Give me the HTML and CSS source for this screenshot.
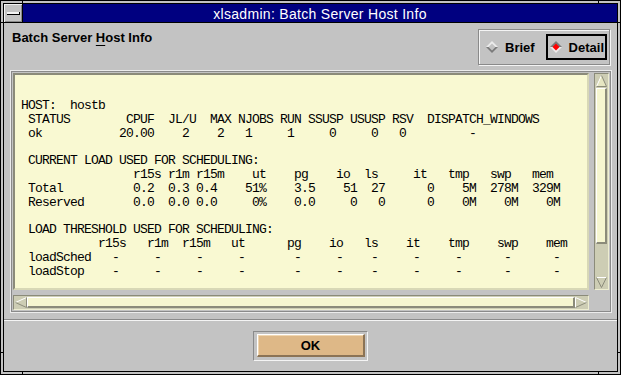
FILE: index.html
```html
<!DOCTYPE html>
<html>
<head>
<meta charset="utf-8">
<link rel="stylesheet" href="styles.css">
</head>
<body>
<div class="window">
  <div class="frame">
    <div class="titlebar">
      <div class="menu-btn"><span class="menu-bar"></span></div>
      <div class="title">xlsadmin: Batch Server Host Info</div>
    </div>
    <div class="content">
      <div class="head">
        <div class="label">Batch Server <span class="mn">H</span>ost Info</div>
        <div class="radiobox">
          <div class="toggle brief">
            <svg width="12" height="12" viewBox="0 0 12 12"><polygon points="0,6 6,0 12,6" fill="#ececec"/><polygon points="0,6 6,12 12,6" fill="#7a7a7a"/><polygon points="2.5,6 6,2.5 9.5,6 6,9.5" fill="#c3c3c3"/></svg>
            <span>Brief</span>
          </div>
          <div class="toggle detail">
            <svg width="12" height="12" viewBox="0 0 12 12"><polygon points="0,6 6,0 12,6" fill="#7a7a7a"/><polygon points="0,6 6,12 12,6" fill="#ececec"/><polygon points="2.5,6 6,2.5 9.5,6 6,9.5" fill="#ff0000"/></svg>
            <span>Detail</span>
          </div>
        </div>
      </div>
      <div class="scrolled">
        <div class="textarea"><pre class="out">HOST:  hostb
 STATUS        CPUF  JL/U  MAX NJOBS RUN SSUSP USUSP RSV  DISPATCH_WINDOWS
 ok           20.00    2    2   1     1     0     0   0         -

 CURRENT LOAD USED FOR SCHEDULING:
                r15s r1m r15m    ut    pg    io  ls     it   tmp   swp   mem
 Total          0.2  0.3 0.4    51%    3.5    51  27      0    5M  278M  329M
 Reserved       0.0  0.0 0.0     0%    0.0     0   0      0    0M    0M    0M

 LOAD THRESHOLD USED FOR SCHEDULING:
           r15s   r1m  r15m   ut      pg    io   ls    it    tmp    swp    mem
 loadSched   -     -     -     -       -     -    -     -     -      -      -
 loadStop    -     -     -     -       -     -    -     -     -      -      -</pre></div>
        <div class="vscroll">
          <svg class="arr-up" width="11" height="12" viewBox="0 0 11 12"><polygon points="5.5,0.5 10.5,11.5 0.5,11.5" fill="#e6e6c2"/><path d="M0.5 11.5 L5.5 0.5" stroke="#ffffff" fill="none"/><path d="M5.5 0.5 L10.5 11.5 L0.5 11.5" stroke="#8b8b7a" fill="none"/></svg>
          <div class="vthumb"></div>
          <div class="trough"></div>
          <svg class="arr-down" width="11" height="11" viewBox="0 0 11 11"><polygon points="0.5,0.5 10.5,0.5 5.5,10.5" fill="#cdcdb4"/><path d="M0.5 0.5 L10.5 0.5" stroke="#ffffff" fill="none"/><path d="M0.5 0.5 L5.5 10.5 L10.5 0.5" stroke="#8b8b7a" fill="none"/></svg>
        </div>
        <div class="hscroll">
          <svg class="arr-left" width="12" height="11" viewBox="0 0 12 11"><polygon points="0.5,5.5 11.5,0.5 11.5,10.5" fill="#cdcdb4"/><path d="M0.5 5.5 L11.5 0.5" stroke="#ffffff" fill="none"/><path d="M0.5 5.5 L11.5 10.5 L11.5 0.5" stroke="#8b8b7a" fill="none"/></svg>
          <div class="hthumb"></div>
          <svg class="arr-right" width="12" height="11" viewBox="0 0 12 11"><polygon points="0.5,0.5 11.5,5.5 0.5,10.5" fill="#cdcdb4"/><path d="M0.5 10.5 L0.5 0.5 L11.5 5.5" stroke="#ffffff" fill="none"/><path d="M11.5 5.5 L0.5 10.5" stroke="#8b8b7a" fill="none"/></svg>
        </div>
        <div class="corner"></div>
      </div>
      <div class="sep"></div>
      <div class="actions">
        <div class="okframe"><div class="okbtn">OK</div></div>
      </div>
    </div>
  </div>
  <span class="notch nt1"></span>
  <span class="notch nt2"></span>
  <span class="notch nb1"></span>
  <span class="notch nb2"></span>
  <span class="notch nl1"></span>
  <span class="notch nl2"></span>
  <span class="notch nr1"></span>
  <span class="notch nr2"></span>
</div>
</body>
</html>
```
FILE: styles.css
```css
* { box-sizing: border-box; }
html, body { margin: 0; padding: 0; }
body {
  width: 621px;
  height: 375px;
  overflow: hidden;
  background: #c3c3c3;
  font-family: "Liberation Sans", Arial, sans-serif;
  color: #000;
}
.window {
  position: relative;
  width: 621px;
  height: 375px;
  border: 1px solid #000;
  padding: 2px;
  background: #c3c3c3;
}
.frame {
  height: 100%;
  border: 1px solid #000;
  display: flex;
  flex-direction: column;
}
.titlebar {
  flex: none;
  display: flex;
  height: 19px;
  border-bottom: 1px solid #000;
}
.menu-btn {
  width: 19px;
  border-right: 1px solid #000;
  background: #c3c3c3;
  box-shadow: inset 1px 1px 0 #f2f2f2, inset -1px -1px 0 #8a8a8a;
  display: flex;
  align-items: center;
  justify-content: center;
}
.menu-bar {
  display: block;
  width: 13px;
  height: 3px;
  background: #f4f4f4;
  border-right: 1px solid #000;
  border-bottom: 1px solid #000;
}
.title {
  flex: 1;
  background: #000080;
  color: #fff;
  font-size: 14px;
  line-height: 18px;
  padding-top: 1px;
  letter-spacing: 0.3px;
  text-align: center;
  white-space: nowrap;
  overflow: hidden;
}
.content {
  flex: 1;
  display: flex;
  flex-direction: column;
}
.head {
  flex: none;
  display: flex;
  justify-content: space-between;
  align-items: flex-start;
  height: 36px;
  margin: 6px 7px 0 8px;
}
.label {
  font-weight: bold;
  font-size: 13px;
  line-height: 15px;
  margin-top: 1px;
}
.mn {
  text-decoration: underline;
  text-underline-offset: 3px;
}
.radiobox {
  width: 132px;
  height: 36px;
  border: 1px solid #8a8a8a;
  box-shadow: inset 1px 1px 0 #f4f4f4, 1px 1px 0 #f4f4f4;
  display: flex;
  align-items: center;
  padding: 0 2px 0 7px;
}
.toggle {
  display: flex;
  align-items: center;
  gap: 7px;
  font-weight: bold;
  font-size: 13px;
  line-height: 15px;
}
.toggle svg { display: block; flex: none; }
.detail {
  margin-left: auto;
  height: 26px;
  border: 2px solid #000;
  padding: 0 1px 0 2px;
}
.scrolled {
  flex: none;
  height: 243px;
  margin: 5px 5px 0 6px;
  border: 1px solid #ececec;
  box-shadow: inset 0 0 0 1px #8a8a8a;
  padding: 2px;
  display: grid;
  grid-template-columns: 576px 15px;
  grid-template-rows: 217px 15px;
  column-gap: 5px;
  row-gap: 5px;
}
.textarea {
  background: #f9f9d2;
  border: 2px solid;
  border-color: #8b8b7a #d8d8b6 #d8d8b6 #8b8b7a;
  overflow: hidden;
}
.out {
  margin: 0;
  padding: 24px 0 0 6px;
  font-family: "Liberation Mono", "Courier New", monospace;
  font-size: 13px;
  letter-spacing: -0.8px;
  line-height: 13.83px;
  color: #000;
}
.vscroll {
  background: #cdcdb4;
  border: 1px solid;
  border-color: #8b8b7a #eeeed1 #eeeed1 #8b8b7a;
  display: flex;
  flex-direction: column;
  align-items: center;
}
.arr-up { display: block; margin-top: 1px; flex: none; }
.vthumb {
  flex: none;
  width: 11px;
  height: 156px;
  margin-top: 1px;
  background: #f6f6d0;
  border-top: 1px solid #ffffff;
  border-left: 1px solid #ffffff;
  border-right: 2px solid #8b8b7a;
  border-bottom: 2px solid #8b8b7a;
}
.trough { flex: 1; }
.arr-down { display: block; margin-bottom: 1px; flex: none; }
.hscroll {
  background: #cdcdb4;
  border: 1px solid;
  border-color: #8b8b7a #eeeed1 #eeeed1 #8b8b7a;
  display: flex;
  align-items: center;
}
.arr-left { display: block; margin-left: 1px; flex: none; }
.arr-right { display: block; margin-right: 1px; flex: none; }
.hthumb {
  flex: 1;
  height: 11px;
  background: #f6f6d0;
  border-top: 1px solid #ffffff;
  border-left: 1px solid #ffffff;
  border-right: 2px solid #8b8b7a;
  border-bottom: 2px solid #8b8b7a;
}
.corner { background: #c3c3c3; }
.sep {
  flex: none;
  height: 2px;
  margin-top: 6px;
  border-top: 1px solid #8a8a8a;
  border-bottom: 1px solid #f4f4f4;
}
.actions {
  flex: 1;
  display: flex;
  align-items: center;
  justify-content: center;
}
.okframe {
  width: 115px;
  height: 30px;
  border: 1px solid;
  border-color: #8a8a8a #f4f4f4 #f4f4f4 #8a8a8a;
  padding: 2px 2px 3px 3px;
}
.okbtn {
  width: 100%;
  height: 100%;
  background: #deb887;
  border-top: 1px solid #ffffff;
  border-left: 1px solid #ffffff;
  border-right: 2px solid #8b7355;
  border-bottom: 2px solid #8b7355;
  box-shadow: inset 1px 1px 0 #f0d6b0;
  display: flex;
  align-items: center;
  justify-content: center;
  font-weight: bold;
  font-size: 13px;
}
.notch { position: absolute; background: #000; display: block; }
.nt1 { left: 21px; top: 0; width: 1px; height: 2px; }
.nt2 { left: 597px; top: 0; width: 1px; height: 2px; }
.nb1 { left: 21px; top: 371px; width: 1px; height: 2px; }
.nb2 { left: 597px; top: 371px; width: 1px; height: 2px; }
.nl1 { left: 0; top: 21px; width: 2px; height: 1px; }
.nl2 { left: 0; top: 351px; width: 2px; height: 1px; }
.nr1 { left: 617px; top: 21px; width: 2px; height: 1px; }
.nr2 { left: 617px; top: 351px; width: 2px; height: 1px; }
```
